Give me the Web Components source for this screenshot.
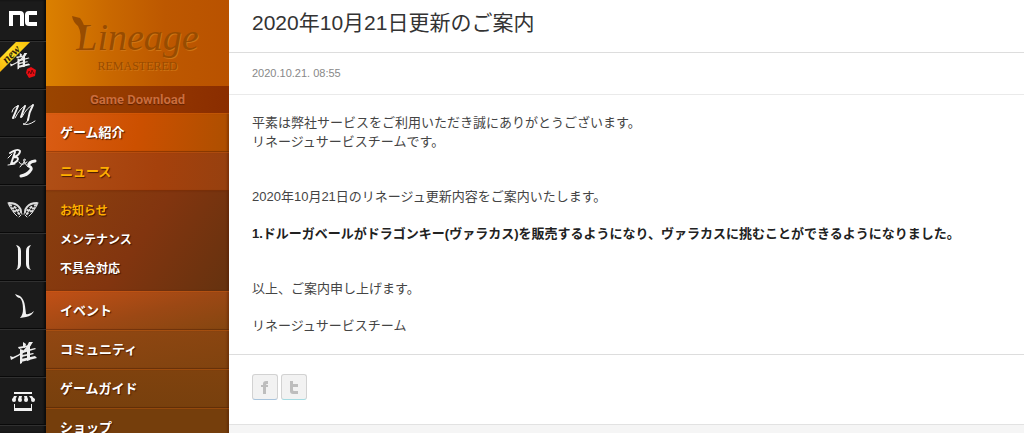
<!DOCTYPE html>
<html lang="ja">
<head>
<meta charset="utf-8">
<title>2020年10月21日更新のご案内</title>
<style>
    body {
        margin: 0;
        font-family: "Liberation Sans", "Noto Sans CJK JP", sans-serif;
        font-size: 13px;
        line-height: 19px;
        color: #444;
        background: #fff;
    }
    b {
        color: #222;
    }
</style>
</head>
<body>
<page-layout>
    <game-rail slot="rail">
        <rail-item name="NC" icon="nc" first></rail-item>
        <rail-item name="雀龍門" icon="jan" badge="new"></rail-item>
        <rail-item name="リネージュM" icon="m"></rail-item>
        <rail-item name="ブレイドアンドソウル" icon="bns"></rail-item>
        <rail-item name="タワー オブ アイオン" icon="wings"></rail-item>
        <rail-item name="リネージュ2" icon="two"></rail-item>
        <rail-item name="リネージュ" icon="lin"></rail-item>
        <rail-item name="雀龍門 PC" icon="jan2"></rail-item>
        <rail-item name="ショップ" icon="shop"></rail-item>
        <rail-item name="その他" icon=""></rail-item>
    </game-rail>
    <side-menu slot="menu">
        <menu-link tone="hot">ゲーム紹介</menu-link>
        <menu-link tone="open">ニュース</menu-link>
        <sub-menu>
            <a href="#notice" class="on">お知らせ</a>
            <a href="#maintenance">メンテナンス</a>
            <a href="#issues">不具合対応</a>
        </sub-menu>
        <menu-link tone="event">イベント</menu-link>
        <menu-link tone="brown">コミュニティ</menu-link>
        <menu-link tone="dark">ゲームガイド</menu-link>
        <menu-link tone="darker">ショップ</menu-link>
    </side-menu>
    <notice-article>
        <h1 slot="title">2020年10月21日更新のご案内</h1>
        <time slot="date" datetime="2020-10-21T08:55">2020.10.21. 08:55</time>
        <p>平素は弊社サービスをご利用いただき誠にありがとうございます。<br>リネージュサービスチームです。</p>
        <p class="far">2020年10月21日のリネージュ更新内容をご案内いたします。</p>
        <p><b>1.ドルーガベールがドラゴンキー(ヴァラカス)を販売するようになり、ヴァラカスに挑むことができるようになりました。</b></p>
        <p class="far">以上、ご案内申し上げます。</p>
        <p>リネージュサービスチーム</p>
        <share-button slot="share" site="facebook"></share-button>
        <share-button slot="share" site="twitter"></share-button>
    </notice-article>
</page-layout>

<script>
class PageLayout extends HTMLElement {

    constructor() {
        super();
        this.attachShadow({mode: "open"}).innerHTML = `
        <style>
            :host {
                display: flex;
                height: 100vh;
                overflow: hidden;
            }
            main {
                flex: 1;
                min-width: 0;
                display: flex;
            }
        </style>
        <slot name="rail"></slot>
        <slot name="menu"></slot>
        <main><slot></slot></main>`;
    }
}

class GameRail extends HTMLElement {

    constructor() {
        super();
        this.attachShadow({mode: "open"}).innerHTML = `
        <style>
            :host {
                display: block;
                flex: none;
                width: 46px;
                background: #1b1b1b;
                box-shadow: inset -2px 0 2px #0c0c0c;
            }
            nav {
                display: flex;
                flex-direction: column;
            }
        </style>
        <nav><slot></slot></nav>`;
    }
}

const jan = `
    <path d="M23 0c-4 7-10 12-22 18l-1-4 3 1C11 12 16 7 19 0z"/>
    <path d="M8 5l12-2 1 1-12 3zM12 9l13-3 1 1-13 4zM12 13l11-2 1 1-12 3zM11 17l14-3 2 2-16 4z"/>
    <path d="M10 7l3 1-1 13-2 1zM17 5l3-1 0 14-3 1zM13 0l3 2-1 4-2-1z"/>`;

const icons = {
    nc: `<g fill="none" stroke="#fff" stroke-width="4">
            <path d="M11 26V13h9q2 0 2 2v11M37 13h-8q-2 0-2 2v7q0 2 2 2h8"/></g>`,
    jan: `<g fill="#eee" transform="translate(10 11) scale(.75)">${jan}</g>
        <path fill="#e80d12" d="M31 25l5 3-1 6-6 2-3-5 1-4z"/>
        <path fill="none" stroke="#6d0507" d="M28 32l1-3 2 3 1-4 2 4"/>`,
    m: `<g fill="none" stroke="#f2f2f2" stroke-linecap="round" stroke-linejoin="round">
            <path stroke-width="1" d="M12 22q1-5 6-6M15 28q5-10 10-12M22 27q5-10 11-12M28 29q-1 5-5 5 5 2 12-3"/>
            <path stroke-width="2" d="M18 16q-2 5-5 12M25 16q-2 5-4 11M33 15q-4 7-5 15"/></g>`,
    bns: `<g fill="none" stroke="#f2f2f2" stroke-linecap="round" stroke-linejoin="round">
            <path stroke-width="2" d="M15 14l-4 12M10 15q8-5 10-2 0 4-6 6 6 0 3 4-3 3-6 3"/>
            <path stroke-width="1" d="M8 20l4-4M8 27l7-1M20 29q7-8 5-8-4 0 3 8M19 24q2 5 8 0"/>
            <path stroke-width="3" d="M35 23q-7 1-6 5 4 2 1 5-3 4-9 5"/></g>`,
    wings: `<g id="w" fill="none" stroke="#ddd" stroke-linecap="round">
            <path stroke-width="2" d="M9 17q7 0 10 4 2 2 2 5"/>
            <path stroke-width="2" stroke-dasharray="3 2" stroke-linecap="butt" d="M9 19q6 1 10 6M11 22q5 1 9 5M13 25q4 0 7 4"/>
            <path stroke-width="1" d="M8 17l2 4 2 3 2 3 2 2 1 1M21 26l1 2M21 29l-2 2"/></g>
        <use href="#w" transform="matrix(-1 0 0 1 46 0)"/>`,
    two: `<path fill="#f2f2f2" d="M16 11q5 1 5 6v13q0 5-5 6 2-2 2-6V17q0-4-2-6zM31 11q-5 1-5 6v13q0 5 5 6-2-2-2-6V17q0-4 2-6z"/>`,
    lin: `<path fill="#f2f2f2" d="M15 12l5 2q4 3 5 10l1 8q4 1 8-3-2 5-8 6l-6 1q3-3 3-9 0-8-3-11-3 0-5-4z"/>`,
    jan2: `<g fill="#eee" transform="translate(10 12)">${jan}</g>`,
    shop: `<g fill="#f2f2f2"><path d="M14 14h18v2H14zM14 18h3l-2 4h-3zM19 18h3l-1 4h-3zM24 18h3l1 4h-3zM29 18h3l3 4h-3z"/>
            <circle cx="14" cy="22" r="2"/><circle cx="20" cy="22" r="2"/><circle cx="26" cy="22" r="2"/><circle cx="33" cy="22" r="2"/>
            <path d="M14 26h1v4h16v-4h1v7H14z"/></g>`
};

class RailItem extends HTMLElement {

    connectedCallback() {
        const badge = this.getAttribute("badge");
        this.attachShadow({mode: "open"}).innerHTML = `
        <style>
            :host {
                display: block;
                position: relative;
                height: 46px;
                overflow: hidden;
                border-bottom: 1px solid #090909;
                border-top: 1px solid #303030;
            }
            :host([first]) {
                height: 40px;
                border-top: 0;
            }
            a, svg {
                display: block;
            }
            .badge {
                position: absolute;
                left: -16px;
                top: 7px;
                width: 54px;
                background: linear-gradient(90deg, #f8a800, #ffe028, #f8b800);
                color: #30240a;
                font: bold italic 12px/10px "Liberation Serif", serif;
                text-align: center;
                transform: rotate(-45deg);
            }
        </style>
        <a href="#${this.getAttribute("icon")}" aria-label="${this.getAttribute("name")}">
            <svg width="46" height="48" viewBox="0 0 46 48">${icons[this.getAttribute("icon")] || ""}</svg>
            ${badge ? `<span class="badge">${badge}</span>` : ""}
        </a>`;
    }
}

class SideMenu extends HTMLElement {

    constructor() {
        super();
        this.attachShadow({mode: "open"}).innerHTML = `
        <style>
            :host {
                display: block;
                flex: none;
                width: 183px;
                background: #733c0c;
            }
            a {
                text-decoration: none;
            }
            .logo {
                display: flex;
                flex-direction: column;
                align-items: center;
                position: relative;
                box-sizing: border-box;
                height: 86px;
                padding-top: 16px;
                background: linear-gradient(90deg, #db8000, #c96800 35%, #bd5800 65%, #b95200);
                color: #984c00;
                font-family: "Liberation Serif", serif;
                text-shadow: 1px 1px 0 #cf7414;
            }
            .name {
                font-size: 38px;
                font-style: italic;
                line-height: 42px;
            }
            .sub {
                font-size: 12px;
                line-height: 16px;
            }
            /* brush flourish over the first letter */
            .logo svg {
                position: absolute;
                left: 24px;
                top: 14px;
            }
            .download {
                display: block;
                background: linear-gradient(100deg, #9a4500, #933600 60%, #8a2d00);
                color: #cb6d3c;
                font: bold 13px/27px Roboto, sans-serif;
                text-align: center;
                text-shadow: 0 1px 1px #5c2000;
            }
        </style>
        <a class="logo" href="#top">
            <svg width="24" height="34" viewBox="0 0 24 34">
                <path fill="#984c00" d="M2 2l8 2q4 5 5 12l-2 14-3 2q2-13-2-20-5-4-6-10z"/>
            </svg>
            <span class="name">Lineage</span>
            <span class="sub">REMASTERED</span>
        </a>
        <a class="download" href="#download">Game Download</a>
        <nav><slot></slot></nav>`;
    }
}

class MenuLink extends HTMLElement {

    constructor() {
        super();
        this.attachShadow({mode: "open"}).innerHTML = `
        <style>
            :host {
                display: block;
                color: #fff;
                box-shadow: inset -2px 0 2px rgba(70, 20, 0, .3);
            }
            :host([tone=hot]) {
                background: linear-gradient(100deg, #da5c14, #cc5000 50%, #ad4f00);
            }
            :host([tone=open]) {
                color: #ffae00;
                background: linear-gradient(100deg, #b04f16, #a5410c 60%, #96400f);
            }
            :host([tone=event]) {
                background: linear-gradient(165deg, #c25016, #9c4814 55%, #844610);
            }
            :host([tone=brown]) {
                background: linear-gradient(170deg, #924712, #80430f);
            }
            :host([tone=dark]) {
                background: linear-gradient(#7f420e, #78400d);
            }
            :host([tone=darker]) {
                background: #753e0c;
            }
            a {
                display: block;
                padding: 0 14px;
                border-top: 1px solid rgba(255, 120, 20, .25);
                border-bottom: 1px solid rgba(60, 20, 0, .3);
                color: inherit;
                font-size: 13px;
                font-weight: bold;
                line-height: 37px;
                text-decoration: none;
                text-shadow: 1px 1px 1px #4a1c00;
            }
        </style>
        <a href="#menu"><slot></slot></a>`;
    }
}

class SubMenu extends HTMLElement {

    constructor() {
        super();
        this.attachShadow({mode: "open"}).innerHTML = `
        <style>
            :host {
                display: flex;
                flex-direction: column;
                padding: 6px 14px 7px;
                background: linear-gradient(125deg, #8c400e, #82350f 50%, #65320f);
                box-shadow: inset -2px 0 2px rgba(70, 20, 0, .3);
            }
            ::slotted(a) {
                color: #fff;
                font-size: 12px;
                font-weight: bold;
                line-height: 29px;
                text-decoration: none;
                text-shadow: 1px 1px 1px #3a1400;
            }
            ::slotted(a.on) {
                color: #ffae00;
            }
        </style>
        <slot></slot>`;
    }
}

class NoticeArticle extends HTMLElement {

    constructor() {
        super();
        this.attachShadow({mode: "open"}).innerHTML = `
        <style>
            :host {
                display: flex;
                flex-direction: column;
                flex: 1;
                min-width: 0;
                background: #f5f5f5;
            }
            article {
                background: #fff;
                border-bottom: 1px solid #e2e2e2;
            }
            header {
                padding: 8px 23px 14px;
                border-bottom: 1px solid #ddd;
            }
            ::slotted(h1) {
                margin: 0;
                color: #333;
                font-size: 21px;
                font-weight: normal;
                line-height: 30px;
            }
            .date {
                padding: 0 23px;
                border-bottom: 1px solid #eaeaea;
                color: #888;
                font-size: 11px;
                line-height: 41px;
            }
            .text {
                padding: 18px 23px 1px;
                border-bottom: 1px solid #ddd;
            }
            ::slotted(p) {
                margin: 0 0 18px;
            }
            ::slotted(p.far) {
                margin-top: 36px;
            }
            footer {
                display: flex;
                gap: 3px;
                padding: 19px 23px 24px;
            }
        </style>
        <article>
            <header><slot name="title"></slot></header>
            <div class="date"><slot name="date"></slot></div>
            <div class="text"><slot></slot></div>
            <footer><slot name="share"></slot></footer>
        </article>`;
    }
}

const marks = {
    facebook: "M10 19v-7H8v-2h2V9q0-3 3-3h2v3h-1q-1 0-1 1h2v2h-2v7z",
    twitter: "M8 6h3v3h5v3h-5v3q0 1 1 1h4v3h-5q-3 0-3-3z"
};

class ShareButton extends HTMLElement {

    connectedCallback() {
        const site = this.getAttribute("site");
        this.attachShadow({mode: "open"}).innerHTML = `
        <style>
            :host {
                display: block;
            }
            button {
                display: block;
                width: 26px;
                height: 26px;
                padding: 0;
                border: 1px solid #d2d2d2;
                border-bottom-color: #a9c4dc;
                border-radius: 3px;
                background: #f2f2f2;
            }
            :host([site=twitter]) button {
                border-bottom-color: #a5dbe2;
            }
            svg {
                display: block;
            }
        </style>
        <button type="button" aria-label="${site}">
            <svg width="24" height="24" viewBox="0 0 24 24"><path fill="#bdbdbd" d="${marks[site]}"/></svg>
        </button>`;
    }
}

customElements.define("page-layout", PageLayout);
customElements.define("game-rail", GameRail);
customElements.define("rail-item", RailItem);
customElements.define("side-menu", SideMenu);
customElements.define("menu-link", MenuLink);
customElements.define("sub-menu", SubMenu);
customElements.define("notice-article", NoticeArticle);
customElements.define("share-button", ShareButton);
</script>
</body>
</html>
